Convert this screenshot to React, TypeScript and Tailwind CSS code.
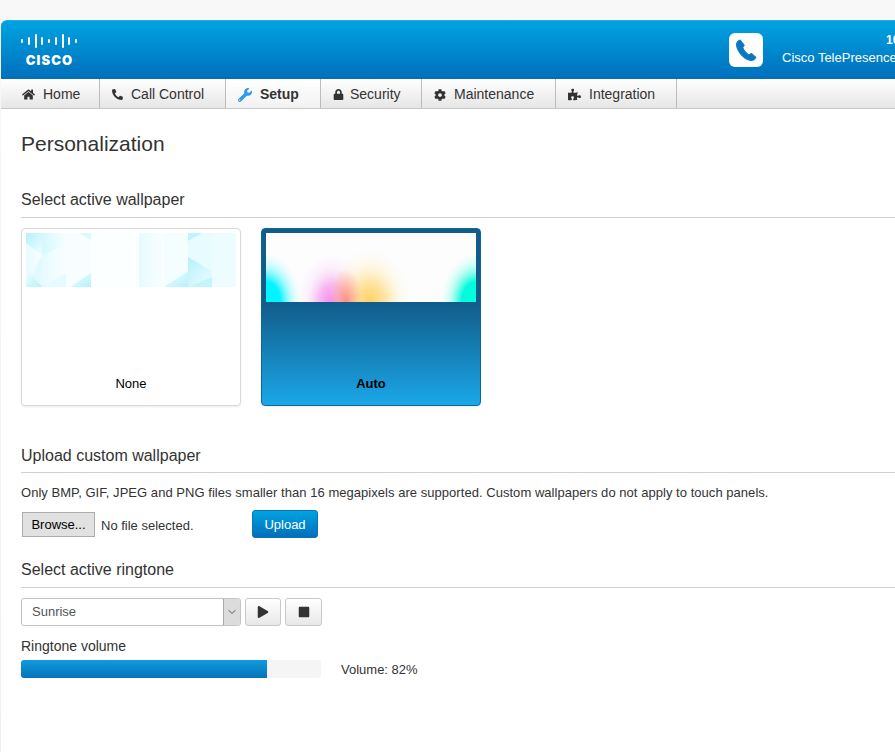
import React from 'react';
import { FaHome, FaPhoneAlt, FaWrench, FaLock, FaCog, FaPuzzlePiece, FaPlay, FaStop } from 'react-icons/fa';
import { ChevronDown } from 'lucide-react';

const tabs = [
  { label: 'Home', icon: FaHome, size: 13, width: 'w-[99px]', pad: 'pl-[21px]', gap: 'gap-[8px]' },
  { label: 'Call Control', icon: FaPhoneAlt, size: 11, width: 'w-[126px]', pad: 'pl-[12px]', gap: 'gap-[8px]' },
  { label: 'Setup', icon: FaWrench, size: 14, width: 'w-[95px]', pad: 'pl-[12px]', gap: 'gap-[8px]', active: true },
  { label: 'Security', icon: FaLock, size: 11, width: 'w-[101px]', pad: 'pl-[12px]', gap: 'gap-[6px]' },
  { label: 'Maintenance', icon: FaCog, size: 12, width: 'w-[134px]', pad: 'pl-[12px]', gap: 'gap-[8px]' },
  { label: 'Integration', icon: FaPuzzlePiece, size: 13, width: 'w-[121px]', pad: 'pl-[12px]', gap: 'gap-[8px]' },
];

const logoBars = [
  [0, 5, 4],
  [7, 3, 8],
  [14, 0, 14],
  [20, 3, 8],
  [27, 5, 4],
  [34, 3, 8],
  [41, 0, 14],
  [47, 3, 8],
  [54, 5, 4],
];

const CiscoLogo = () => (
  <div className="flex flex-col items-center w-[57px]">
    <svg width="57" height="14" viewBox="0 0 57 14" fill="#fff">
      {logoBars.map(([x, y, h]) => (
        <rect key={x} x={x} y={y} width="2" height={h} rx="1" />
      ))}
    </svg>
    <span className="text-white font-['Inter',sans-serif] font-black text-[13px] leading-[13px] tracking-[1.1px] mt-[6px]">CISCO</span>
  </div>
);

const Header = () => (
  <div className="h-[59px] rounded-tl-[6px] border-t border-[#2aa7df] bg-gradient-to-b from-[#00a3e2] to-[#006fbb] flex items-center pl-[20px]">
    <CiscoLogo />
    <div className="ml-[651px] w-[34px] h-[34px] rounded-[6px] bg-white flex items-center justify-center">
      <svg width="26" height="26" viewBox="0 0 24 24" fill="#0a78c0" stroke="#0a78c0" strokeWidth="1" strokeLinejoin="round">
        <path d="M6.5 2.8 L4.4 4.2 C2.8 5.6 3 9 5.2 13 C8 18 13 21.6 16.8 21.6 C18.6 21.6 20 20.6 21 18.8 L17 15.2 L15 16.6 C12.8 15.9 9.4 11.8 8.9 9.5 L10.4 7.6 Z" />
      </svg>
    </div>
    <div className="ml-[19px] w-[220px] text-white text-[13px] leading-[18px] mt-[-2px]">
      <div className="pl-[104px] font-bold text-[12px]">10.0.0.1</div>
      <div>Cisco TelePresence SX20</div>
    </div>
  </div>
);

const Nav = () => (
  <div className="h-[30px] flex bg-gradient-to-b from-[#ffffff] to-[#e6e6e6] border-b border-[#c8c8c8]">
    {tabs.map(t => {
      const Icon = t.icon;
      return (
        <div
          key={t.label}
          className={`${t.width} ${t.pad} ${t.gap} h-[29px] pt-[2px] flex items-center border-r border-[#bcbcbc] text-[14px] text-[#333] ${
            t.active ? 'bg-gradient-to-b from-[#ffffff] to-[#f2f2f2] font-bold' : ''
          }`}
        >
          <Icon size={t.size} className={t.active ? 'text-[#2f9be5]' : 'text-[#333]'} />
          <span>{t.label}</span>
        </div>
      );
    })}
  </div>
);

const SectionTitle = ({ children, className }: { children: React.ReactNode; className: string }) => (
  <div className={`${className} text-[16px] leading-[22px] text-[#333] border-b border-[#cfcfcf]`}>
    {children}
  </div>
);

const PatternThumb = () => (
  <svg width="210" height="54" viewBox="0 0 210 54" className="block">
    <defs>
      <linearGradient id="p1" x1="0" y1="0" x2="1" y2="1">
        <stop offset="0" stopColor="#b4f1fc" />
        <stop offset="1" stopColor="#effdff" />
      </linearGradient>
      <linearGradient id="p2" x1="1" y1="1" x2="0" y2="0">
        <stop offset="0" stopColor="#b4f1fc" />
        <stop offset="1" stopColor="#f4feff" />
      </linearGradient>
      <linearGradient id="p3" x1="0" y1="0" x2="1" y2="0">
        <stop offset="0" stopColor="#d4f8fe" />
        <stop offset="1" stopColor="#f6feff" />
      </linearGradient>
      <linearGradient id="p4" x1="0" y1="0" x2="1" y2="0">
        <stop offset="0" stopColor="#e6fbff" />
        <stop offset="1" stopColor="#fafeff" />
      </linearGradient>
    </defs>
    <rect width="210" height="54" fill="#fff" />
    <rect x="0" y="0" width="16" height="54" fill="url(#p4)" />
    <polygon points="0,0 16,0 16,22 0,10" fill="url(#p1)" />
    <polygon points="0,54 16,22 16,54" fill="#e2faff" />
    <polygon points="0,36 16,54 0,54" fill="url(#p2)" />
    <rect x="16" y="0" width="24" height="54" fill="url(#p4)" />
    <polygon points="16,0 40,0 40,12 16,22" fill="url(#p3)" />
    <polygon points="16,54 40,40 40,54" fill="#e6fbff" />
    <rect x="40" y="0" width="25" height="54" fill="#f8feff" />
    <polygon points="54,0 78,0 66,8" fill="#dcf9fe" />
    <polygon points="44,54 65,40 65,54" fill="url(#p2)" />
    <rect x="65" y="0" width="48" height="54" fill="#fcffff" />
    <rect x="113" y="0" width="25" height="54" fill="url(#p4)" />
    <rect x="138" y="0" width="24" height="54" fill="#f4feff" />
    <polygon points="138,54 162,38 162,54" fill="url(#p2)" />
    <rect x="162" y="0" width="24" height="54" fill="#e8fbff" />
    <polygon points="162,0 176,0 162,8" fill="#c0f3fc" />
    <polygon points="162,24 186,38 186,54 162,54" fill="url(#p1)" />
    <polygon points="162,54 186,44 186,54" fill="#c6f4fc" />
    <rect x="186" y="0" width="24" height="54" fill="#edfcff" />
  </svg>
);

const AutoThumb = () => (
  <svg width="210" height="69" viewBox="0 0 210 69" className="block">
    <defs>
      <radialGradient id="c1">
        <stop offset="0" stopColor="#00f5ff" />
        <stop offset="0.4" stopColor="#00f5ff" />
        <stop offset="0.7" stopColor="#80f8ff" stopOpacity="0.5" />
        <stop offset="1" stopColor="#e0fdff" stopOpacity="0" />
      </radialGradient>
      <radialGradient id="c2">
        <stop offset="0" stopColor="#00ffdc" />
        <stop offset="0.4" stopColor="#00fbdc" />
        <stop offset="0.7" stopColor="#80fde8" stopOpacity="0.5" />
        <stop offset="1" stopColor="#e0fff8" stopOpacity="0" />
      </radialGradient>
      <radialGradient id="c3">
        <stop offset="0" stopColor="#f488ea" />
        <stop offset="0.35" stopColor="#f4a0ee" stopOpacity="0.75" />
        <stop offset="0.7" stopColor="#f8ccf4" stopOpacity="0.25" />
        <stop offset="1" stopColor="#fbe4f8" stopOpacity="0" />
      </radialGradient>
      <radialGradient id="c4">
        <stop offset="0" stopColor="#ffd060" />
        <stop offset="0.35" stopColor="#ffdc88" stopOpacity="0.8" />
        <stop offset="0.7" stopColor="#ffeebb" stopOpacity="0.3" />
        <stop offset="1" stopColor="#fff4d8" stopOpacity="0" />
      </radialGradient>
      <radialGradient id="c5">
        <stop offset="0" stopColor="#ff8070" stopOpacity="0.85" />
        <stop offset="1" stopColor="#ff9a80" stopOpacity="0" />
      </radialGradient>
    </defs>
    <rect width="210" height="69" fill="#fdfdfe" />
    <ellipse cx="0" cy="69" rx="36" ry="50" fill="url(#c1)" />
    <ellipse cx="210" cy="69" rx="36" ry="50" fill="url(#c2)" />
    <ellipse cx="66" cy="69" rx="36" ry="50" fill="url(#c3)" />
    <ellipse cx="104" cy="69" rx="42" ry="54" fill="url(#c4)" />
    <ellipse cx="80" cy="69" rx="16" ry="34" fill="url(#c5)" />
  </svg>
);

const Card = ({ label, active, children }: { label: string; active?: boolean; children: React.ReactNode }) => (
  <div
    className={`w-[220px] h-[178px] rounded-[4px] border p-[4px] flex flex-col items-center shadow-[0_1px_2px_rgba(0,0,0,0.08)] ${
      active
        ? 'border-[#0d6a95] bg-[linear-gradient(to_bottom,#115c8a_0%,#115c8a_42%,#1aa7e8_100%)]'
        : 'border-[#d9d9d9] bg-white'
    }`}
  >
    {children}
    <div className={`mt-auto mb-[9px] text-[13px] leading-[16px] text-black ${active ? 'font-bold' : ''}`}>{label}</div>
  </div>
);

export default function App() {
  return (
    <div className="w-[895px] h-[752px] overflow-hidden bg-[linear-gradient(to_bottom,#f8f8f8,#f0f0f0)] pt-[20px] pl-[1px] font-['Liberation_Sans',Arial,sans-serif]">
      <div className="w-[1100px] h-[732px] bg-white">
        <Header />
        <Nav />
        <div className="pl-[20px] text-[#333]">
          <h1 className="text-[21px] leading-[26px] mt-[22px]">Personalization</h1>

          <SectionTitle className="mt-[32px] pb-[6px]">Select active wallpaper</SectionTitle>
          <div className="flex gap-[20px] mt-[10px]">
            <Card label="None">
              <PatternThumb />
            </Card>
            <Card label="Auto" active>
              <AutoThumb />
            </Card>
          </div>

          <SectionTitle className="mt-[39px] pb-[5px]">Upload custom wallpaper</SectionTitle>
          <p className="text-[13px] tracking-[0.04px] leading-[16px] mt-[12px]">
            Only BMP, GIF, JPEG and PNG files smaller than 16 megapixels are supported. Custom wallpapers do not apply to touch panels.
          </p>
          <div className="flex items-center mt-[9px] h-[28px]">
            <button className="ml-[1px] w-[73px] h-[25px] mt-[1px] pt-[1px] bg-[#e1e1e1] border border-[#adadad] text-[13px] text-black">
              Browse...
            </button>
            <span className="ml-[6px] w-[151px] pt-[3px] text-[13px]">No file selected.</span>
            <button className="w-[66px] h-[28px] pt-[1px] rounded-[3px] border border-[#0a73b4] bg-gradient-to-b from-[#00a3e2] to-[#006fbb] text-white text-[13px]">
              Upload
            </button>
          </div>

          <SectionTitle className="mt-[21px] pb-[6px]">Select active ringtone</SectionTitle>
          <div className="flex gap-[4px] mt-[10px]">
            <div className="w-[220px] h-[28px] rounded-[3px] border border-[#c4c4c4] bg-white flex items-center pl-[10px] text-[13px] text-[#555] relative">
              Sunrise
              <div className="absolute right-0 top-0 bottom-0 w-[17px] bg-[#dcdcdc] border-l border-[#aaa] flex items-center justify-center rounded-r-[3px]">
                <ChevronDown size={12} className="text-[#555]" />
              </div>
            </div>
            <button className="w-[36px] h-[28px] rounded-[3px] border border-[#c8c8c8] bg-gradient-to-b from-white to-[#e8e8e8] flex items-center justify-center">
              <FaPlay size={12} className="text-[#333]" />
            </button>
            <button className="w-[37px] h-[28px] rounded-[3px] border border-[#c8c8c8] bg-gradient-to-b from-white to-[#e8e8e8] flex items-center justify-center">
              <FaStop size={12} className="text-[#333]" />
            </button>
          </div>

          <div className="text-[14px] leading-[16px] mt-[12px]">Ringtone volume</div>
          <div className="flex items-center mt-[4px]">
            <div className="w-[300px] h-[18px] rounded-[3px] bg-[#f5f5f5] overflow-hidden">
              <div className="h-full bg-gradient-to-b from-[#129ade] to-[#0574b9]" style={{ width: '82%' }} />
            </div>
            <span className="ml-[20px] pt-[2px] text-[13px]">Volume: 82%</span>
          </div>
        </div>
      </div>
    </div>
  );
}
